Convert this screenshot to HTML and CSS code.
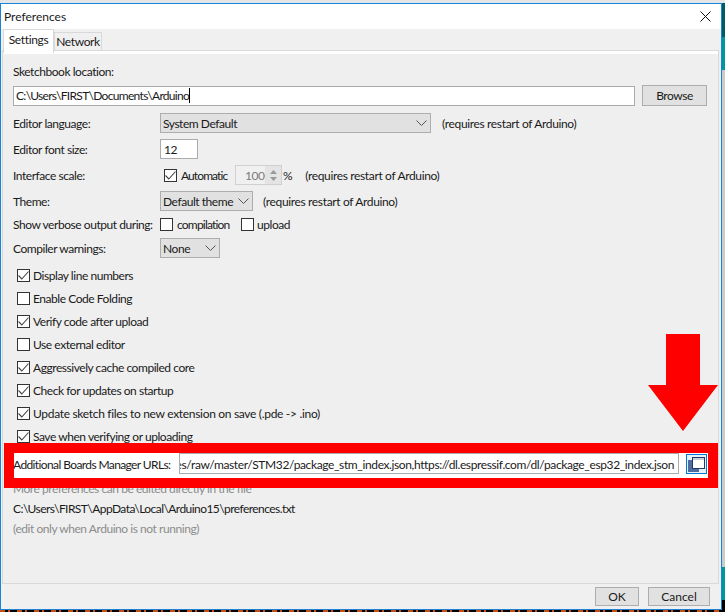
FILE: index.html
```html
<!DOCTYPE html>
<html lang="en">
<head>
<meta charset="utf-8">
<title>Preferences</title>
<link rel="stylesheet" href="styles.css">
</head>
<body>
<div class="screen">
  <div class="strip-right"><i class="s1"></i><i class="s3"></i><i class="s4"></i><i class="s3 low"></i><i class="s5"></i></div>
  <div class="window">
    <header class="titlebar">
      <span>Preferences</span>
      <svg class="close" width="11" height="11" viewBox="0 0 11 11"><path d="M.5.5l10 10M10.500.5l-10 10" stroke="#111" fill="none"/></svg>
    </header>
    <nav class="tabs">
      <div class="tab active">Settings</div>
      <div class="tab">Network</div>
    </nav>
    <main class="panel">
      <div class="row sketch-label"><span>Sketchbook location:</span></div>
      <div class="row sketch-row">
        <div class="field grow field-path">C:\Users\FIRST\Documents\Arduino<b class="caret"></b></div>
        <div class="btn browse">Browse</div>
      </div>
      <div class="row lang"><label class="lbl">Editor language:</label>
        <div class="select w-lang">System Default<svg class="chev" width="11" height="6" viewBox="0 0 11 6"><path d="M.5.500l5 5 5-5" fill="none" stroke="#555"/></svg></div>
        <span class="note n-lang">(requires restart of Arduino)</span></div>
      <div class="row r26"><label class="lbl">Editor font size:</label><div class="field w-font">12</div></div>
      <div class="row r26"><label class="lbl">Interface scale:</label>
        <div class="check c-auto on"><svg width="11" height="9" viewBox="0 0 11 9"><path d="M.5 4.500l3.300 3.500 6.700-7.500" fill="none" stroke="#444" stroke-width="1.100"/></svg></div>
        <span class="t-auto">Automatic</span>
        <div class="spin"><span class="spin-val">100</span><div class="spin-btns"><svg width="7" height="4" viewBox="0 0 7 4"><path d="M0 4l3.500-4 3.500 4z" fill="#999"/></svg><svg width="7" height="4" viewBox="0 0 7 4"><path d="M0 0l3.500 4 3.500-4z" fill="#999"/></svg></div></div>
        <span class="pct">%</span>
        <span class="note n-scale">(requires restart of Arduino)</span></div>
      <div class="row r26"><label class="lbl">Theme:</label>
        <div class="select w-theme">Default theme<svg class="chev" width="11" height="6" viewBox="0 0 11 6"><path d="M.5.500l5 5 5-5" fill="none" stroke="#555"/></svg></div>
        <span class="note n-theme">(requires restart of Arduino)</span></div>
      <div class="row verbose"><label class="lbl">Show verbose output during:</label>
        <div class="check"></div><span class="t-comp">compilation</span>
        <div class="check c-up"></div><span class="t-up">upload</span></div>
      <div class="row warn"><label class="lbl">Compiler warnings:</label>
        <div class="select w-warn">None<svg class="chev" width="11" height="6" viewBox="0 0 11 6"><path d="M.5.500l5 5 5-5" fill="none" stroke="#555"/></svg></div></div>
      <ul class="opts">
        <li><div class="check on"><svg width="11" height="9" viewBox="0 0 11 9"><path d="M.5 4.500l3.300 3.500 6.700-7.500" fill="none" stroke="#444" stroke-width="1.100"/></svg></div>Display line numbers</li>
        <li><div class="check"></div>Enable Code Folding</li>
        <li><div class="check on"><svg width="11" height="9" viewBox="0 0 11 9"><path d="M.5 4.500l3.300 3.500 6.700-7.500" fill="none" stroke="#444" stroke-width="1.100"/></svg></div>Verify code after upload</li>
        <li><div class="check"></div>Use external editor</li>
        <li><div class="check on"><svg width="11" height="9" viewBox="0 0 11 9"><path d="M.5 4.500l3.300 3.500 6.700-7.500" fill="none" stroke="#444" stroke-width="1.100"/></svg></div>Aggressively cache compiled core</li>
        <li><div class="check on"><svg width="11" height="9" viewBox="0 0 11 9"><path d="M.5 4.500l3.300 3.500 6.700-7.500" fill="none" stroke="#444" stroke-width="1.100"/></svg></div>Check for updates on startup</li>
        <li class="opt-long"><div class="check on"><svg width="11" height="9" viewBox="0 0 11 9"><path d="M.5 4.500l3.300 3.500 6.700-7.500" fill="none" stroke="#444" stroke-width="1.100"/></svg></div>Update sketch files to new extension on save (.pde -&gt; .ino)</li>
        <li><div class="check on"><svg width="11" height="9" viewBox="0 0 11 9"><path d="M.5 4.500l3.300 3.500 6.700-7.500" fill="none" stroke="#444" stroke-width="1.100"/></svg></div>Save when verifying or uploading</li>
      </ul>
      <div class="url-row">
        <label class="url-lbl">Additional Boards Manager URLs:</label>
        <div class="url-field"><span>https://github.com/stm32duino/BoardManagerFiles/raw/master/STM32/package_stm_index.json,https://dl.espressif.com/dl/package_esp32_index.json</span></div>
        <div class="icon-btn">
          <svg width="17" height="15" viewBox="0 0 17 15"><rect x="0" y="3" width="11" height="12" fill="#4f6c9e"/><rect x="4.500" y=".5" width="12" height="11" fill="#fff" stroke="#1f3a6a"/><rect x="5" y="1" width="11" height="2" fill="#c9cfdb"/></svg>
        </div>
      </div>
      <div class="info muted">More preferences can be edited directly in the file</div>
      <div class="info path">C:\Users\FIRST\AppData\Local\Arduino15\preferences.txt</div>
      <div class="info muted">(edit only when Arduino is not running)</div>
    </main>
    <footer class="actions">
      <div class="btn ok">OK</div>
      <div class="btn cancel">Cancel</div>
    </footer>
  </div>
  <div class="strip-bottom"></div>
  <svg class="arrow" width="70" height="97" viewBox="0 0 70 97"><path d="M18 0h34v51h18L35 97 0 51h18z" fill="#f00"/></svg>
</div>
</body>
</html>
```

FILE: styles.css
```css
* { box-sizing: border-box; }
html, body { margin: 0; padding: 0; }
body {
  font-family: "Lato", "Open Sans", sans-serif;
  font-size: 12px;
  color: #1a1a1a;
}
.screen {
  position: relative;
  width: 725px;
  height: 612px;
  overflow: hidden;
  background: #e3e5e7;
}
.strip-right {
  position: absolute;
  right: 0;
  top: 3px;
  width: 3px;
  height: 609px;
  display: flex;
  flex-direction: column;
}
.strip-right .s1 { height: 34px; background: #005c5f; }
.strip-right .s3 { height: 33px; background: #00979c; }
.strip-right .s4 { flex: 1; background: #c9cbcd; }
.strip-right .s5 { height: 12px; background: #000; }
.window {
  position: absolute;
  left: 0;
  top: 3px;
  width: 722px;
  height: 607px;
  border: 1px solid #1883d7;
  background: #f0f0f0;
  display: flex;
  flex-direction: column;
}
.titlebar {
  height: 25px;
  flex: none;
  background: #fff;
  display: flex;
  align-items: center;
  justify-content: space-between;
  padding: 0 6px 1px 3px;
}
.close { margin-right: 4px; }
.tabs {
  height: 21px;
  flex: none;
  display: flex;
  padding-left: 2px;
  align-items: flex-end;
  position: relative;
  z-index: 1;
  letter-spacing: -0.35px;
}
.tab {
  height: 18px;
  width: 48px;
  border: 1px solid #d9d9d9;
  border-bottom: 0;
  background: #f0f0f0;
  display: flex;
  align-items: center;
  justify-content: center;
  white-space: nowrap;
}
.tab.active {
  height: 24px;
  width: 51px;
  margin-bottom: -3px;
  background: #fff;
  padding-bottom: 5px;
}
.panel {
  flex: none;
  height: 534px;
  width: 717px;
  margin: 0 2px 0 1px;
  padding: 10px 11px 0 10px;
  border: 1px solid #d9d9d9;
  box-shadow: inset 0 3px 0 #fff;
  background: #efefef;
  letter-spacing: -0.45px;
}
.row { display: flex; align-items: center; white-space: nowrap; }
.sketch-label { height: 20px; margin-bottom: 4px; }
.sketch-row { height: 21px; margin-bottom: 7px; }
.lang { height: 20px; margin-bottom: 6px; }
.r26 { height: 20px; margin-bottom: 6px; }
.verbose { height: 20px; margin-top: -3px; margin-bottom: 4px; }
.warn { height: 20px; margin-bottom: 6px; }
.lbl { width: 147px; flex: none; }
.grow { flex: 1; }
.path { letter-spacing: -0.56px; }
.field-path { letter-spacing: -0.69px; }
.field {
  height: 20px;
  background: #fff;
  border: 1px solid #ababab;
  display: flex;
  align-items: center;
  padding-left: 2px;
  white-space: nowrap;
}
.caret { width: 1px; height: 15px; background: #000; }
.w-font { width: 38px; padding-left: 3px; }
.btn {
  background: #e1e1e1;
  border: 1px solid #adadad;
  display: flex;
  align-items: center;
  justify-content: center;
  flex: none;
}
.browse { width: 65px; height: 21px; margin-left: 7px; }
.select {
  height: 20px;
  background: #e1e1e1;
  border: 1px solid #adadad;
  display: flex;
  align-items: center;
  justify-content: space-between;
  padding: 0 3px 0 2px;
  flex: none;
  white-space: nowrap;
}
.w-lang { width: 271px; }
.w-theme { width: 93px; }
.w-warn { width: 60px; }
.note { flex: none; letter-spacing: -0.35px; }
.n-lang { margin-left: 11px; }
.n-theme { margin-left: 10px; }
.n-scale { margin-left: 13px; }
.check {
  width: 13px;
  height: 13px;
  flex: none;
  background: #fff;
  border: 1px solid #333;
  display: flex;
  align-items: center;
  justify-content: center;
}
.c-auto { margin-left: 4px; }
.t-auto { margin-left: 4px; width: 54px; flex: none; letter-spacing: -0.9px; }
.spin {
  width: 47px;
  height: 20px;
  flex: none;
  border: 1px solid #d0d0d0;
  background: #f0f0f0;
  display: flex;
  align-items: stretch;
  justify-content: space-between;
  color: #7a7a7a;
}
.spin-val { align-self: center; margin-left: 9px; }
.spin-btns {
  width: 16px;
  background: #e4e4e4;
  display: flex;
  flex-direction: column;
  align-items: center;
  justify-content: center;
  gap: 3px;
}
.pct { margin-left: 1px; }
.t-comp { margin-left: 4px; width: 64px; flex: none; letter-spacing: -0.8px; }
.t-up { margin-left: 3px; }
.opts { list-style: none; margin: 0; padding: 0; }
.opts li {
  height: 23px;
  display: flex;
  align-items: center;
  gap: 3px;
  padding-left: 4px;
  white-space: nowrap;
}
.opts .opt-long { letter-spacing: -0.31px; }
.url-row {
  position: relative;
  height: 25px;
  margin: 5px 0 0 1px;
  width: 694px;
  background: #fff;
  box-shadow: 0 0 0 10px #f00;
  display: flex;
  align-items: flex-start;
  overflow: hidden;
}
.url-lbl { margin-left: -1px; width: 166px; flex: none; white-space: nowrap; line-height: 23px; letter-spacing: -0.61px; }
.url-field {
  width: 500px;
  height: 21px;
  flex: none;
  border: 1px solid #ababab;
  background: #fff;
  display: flex;
  justify-content: flex-end;
  align-items: center;
  overflow: hidden;
  padding: 1px 4px 0 0;
  white-space: nowrap;
  letter-spacing: -0.38px;
}
.url-field span { flex: none; }
.icon-btn {
  width: 21px;
  height: 20px;
  margin: 1px 0 0 7px;
  flex: none;
  border: 1px solid #0078d7;
  background: #e5f1fb;
  display: flex;
  align-items: center;
  justify-content: center;
}
.info { height: 20px; display: flex; align-items: center; }
.muted { color: #8c8c8c; }
.actions {
  flex: 1;
  display: flex;
  justify-content: flex-end;
  padding: 3px 11px 0 0;
  gap: 9px;
}
.ok { width: 44px; height: 19px; }
.cancel { width: 62px; height: 19px; }
.strip-bottom {
  position: absolute;
  left: 0;
  right: 3px;
  bottom: 0;
  height: 2px;
  background: repeating-linear-gradient(90deg, #c8500f 0 5px, #000 5px 8px, #c8500f 8px 10px, #000 10px 17px);
}
.arrow { position: absolute; left: 648px; top: 334px; }
```
